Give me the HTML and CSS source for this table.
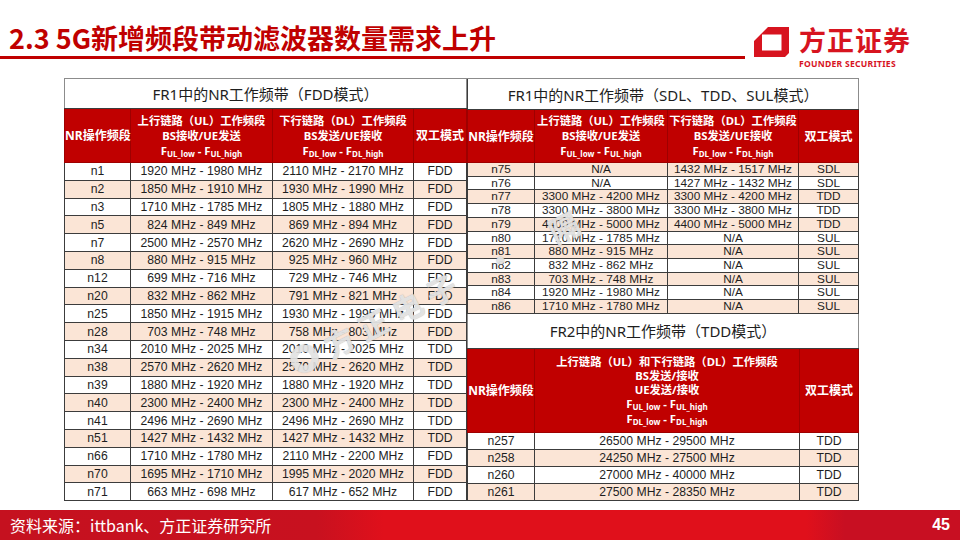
FILE: index.html
```html
<!DOCTYPE html>
<html lang="zh-CN">
<head>
<meta charset="utf-8">
<title>2.3 5G新增频段带动滤波器数量需求上升</title>
<link rel="stylesheet" href="styles.css">
</head>
<body>
<div class="slide">
  <header class="top">
    <div class="title-wrap">
      <h1 class="title">2.3 5G新增频段带动滤波器数量需求上升</h1>
      <div class="rule"></div>
    </div>
    <div class="logo">
      <svg class="logo-mark" width="36" height="32" viewBox="0 0 36 32">
        <path fill="#d7141f" fill-rule="evenodd" d="M14 1 L35 1 L35 27 L31 31 L0 31 L0 15 Z M8 8.5 L27.5 8.5 L27.5 24.5 L8 24.5 Z"/>
      </svg>
      <div class="logo-text">
        <div class="logo-cn">方正证券</div>
        <div class="logo-en">FOUNDER SECURITIES</div>
      </div>
    </div>
  </header>

  <main class="content">
    <table class="t left">
      <colgroup><col class="l1"><col class="l2"><col class="l3"><col class="l4"></colgroup>
      <tr class="cap"><td colspan="4">FR1中的NR工作频带（FDD模式）</td></tr>
      <tr class="hd">
        <td>NR操作频段</td>
        <td>上行链路（UL）工作频段<br>BS接收/UE发送<br><span class="f">F<span class="sb">UL_low</span> - F<span class="sb">UL_high</span></span></td>
        <td>下行链路（DL）工作频段<br>BS发送/UE接收<br><span class="f">F<span class="sb">DL_low</span> - F<span class="sb">DL_high</span></span></td>
        <td>双工模式</td>
      </tr>
      <tr class="row"><td>n1</td><td>1920 MHz - 1980 MHz</td><td>2110 MHz - 2170 MHz</td><td>FDD</td></tr>
      <tr class="row alt"><td>n2</td><td>1850 MHz - 1910 MHz</td><td>1930 MHz - 1990 MHz</td><td>FDD</td></tr>
      <tr class="row"><td>n3</td><td>1710 MHz - 1785 MHz</td><td>1805 MHz - 1880 MHz</td><td>FDD</td></tr>
      <tr class="row alt"><td>n5</td><td>824 MHz - 849 MHz</td><td>869 MHz - 894 MHz</td><td>FDD</td></tr>
      <tr class="row"><td>n7</td><td>2500 MHz - 2570 MHz</td><td>2620 MHz - 2690 MHz</td><td>FDD</td></tr>
      <tr class="row alt"><td>n8</td><td>880 MHz - 915 MHz</td><td>925 MHz - 960 MHz</td><td>FDD</td></tr>
      <tr class="row"><td>n12</td><td>699 MHz - 716 MHz</td><td>729 MHz - 746 MHz</td><td>FDD</td></tr>
      <tr class="row alt"><td>n20</td><td>832 MHz - 862 MHz</td><td>791 MHz - 821 MHz</td><td>FDD</td></tr>
      <tr class="row"><td>n25</td><td>1850 MHz - 1915 MHz</td><td>1930 MHz - 1995 MHz</td><td>FDD</td></tr>
      <tr class="row alt"><td>n28</td><td>703 MHz - 748 MHz</td><td>758 MHz - 803 MHz</td><td>FDD</td></tr>
      <tr class="row"><td>n34</td><td>2010 MHz - 2025 MHz</td><td>2010 MHz - 2025 MHz</td><td>TDD</td></tr>
      <tr class="row alt"><td>n38</td><td>2570 MHz - 2620 MHz</td><td>2570 MHz - 2620 MHz</td><td>TDD</td></tr>
      <tr class="row"><td>n39</td><td>1880 MHz - 1920 MHz</td><td>1880 MHz - 1920 MHz</td><td>TDD</td></tr>
      <tr class="row alt"><td>n40</td><td>2300 MHz - 2400 MHz</td><td>2300 MHz - 2400 MHz</td><td>TDD</td></tr>
      <tr class="row"><td>n41</td><td>2496 MHz - 2690 MHz</td><td>2496 MHz - 2690 MHz</td><td>TDD</td></tr>
      <tr class="row alt"><td>n51</td><td>1427 MHz - 1432 MHz</td><td>1427 MHz - 1432 MHz</td><td>TDD</td></tr>
      <tr class="row"><td>n66</td><td>1710 MHz - 1780 MHz</td><td>2110 MHz - 2200 MHz</td><td>FDD</td></tr>
      <tr class="row alt"><td>n70</td><td>1695 MHz - 1710 MHz</td><td>1995 MHz - 2020 MHz</td><td>FDD</td></tr>
      <tr class="row"><td>n71</td><td>663 MHz - 698 MHz</td><td>617 MHz - 652 MHz</td><td>FDD</td></tr>
    </table>

    <div class="right">
      <table class="t r1">
        <colgroup><col class="r1c1"><col class="r1c2"><col class="r1c3"><col class="r1c4"></colgroup>
        <tr class="cap"><td colspan="4">FR1中的NR工作频带（SDL、TDD、SUL模式）</td></tr>
        <tr class="hd">
          <td>NR操作频段</td>
          <td>上行链路（UL）工作频段<br>BS接收/UE发送<br><span class="f">F<span class="sb">UL_low</span> - F<span class="sb">UL_high</span></span></td>
          <td>下行链路（DL）工作频段<br>BS发送/UE接收<br><span class="f">F<span class="sb">DL_low</span> - F<span class="sb">DL_high</span></span></td>
          <td>双工模式</td>
        </tr>
        <tr class="row alt"><td>n75</td><td>N/A</td><td>1432 MHz - 1517 MHz</td><td>SDL</td></tr>
        <tr class="row"><td>n76</td><td>N/A</td><td>1427 MHz - 1432 MHz</td><td>SDL</td></tr>
        <tr class="row alt"><td>n77</td><td>3300 MHz - 4200 MHz</td><td>3300 MHz - 4200 MHz</td><td>TDD</td></tr>
        <tr class="row"><td>n78</td><td>3300 MHz - 3800 MHz</td><td>3300 MHz - 3800 MHz</td><td>TDD</td></tr>
        <tr class="row alt"><td>n79</td><td>4400 MHz - 5000 MHz</td><td>4400 MHz - 5000 MHz</td><td>TDD</td></tr>
        <tr class="row"><td>n80</td><td>1710 MHz - 1785 MHz</td><td>N/A</td><td>SUL</td></tr>
        <tr class="row alt"><td>n81</td><td>880 MHz - 915 MHz</td><td>N/A</td><td>SUL</td></tr>
        <tr class="row"><td>n82</td><td>832 MHz - 862 MHz</td><td>N/A</td><td>SUL</td></tr>
        <tr class="row alt"><td>n83</td><td>703 MHz - 748 MHz</td><td>N/A</td><td>SUL</td></tr>
        <tr class="row"><td>n84</td><td>1920 MHz - 1980 MHz</td><td>N/A</td><td>SUL</td></tr>
        <tr class="row alt"><td>n86</td><td>1710 MHz - 1780 MHz</td><td>N/A</td><td>SUL</td></tr>
      </table>
      <table class="t r2">
        <colgroup><col class="r2c1"><col class="r2c2"><col class="r2c3"></colgroup>
        <tr class="cap"><td colspan="3">FR2中的NR工作频带（TDD模式）</td></tr>
        <tr class="hd">
          <td>NR操作频段</td>
          <td>上行链路（UL）和下行链路（DL）工作频段<br>BS发送/接收<br>UE发送/接收<br><span class="f">F<span class="sb">UL_low</span> - F<span class="sb">UL_high</span></span><br><span class="f">F<span class="sb">DL_low</span> - F<span class="sb">DL_high</span></span></td>
          <td>双工模式</td>
        </tr>
        <tr class="row"><td>n257</td><td>26500 MHz - 29500 MHz</td><td>TDD</td></tr>
        <tr class="row alt"><td>n258</td><td>24250 MHz - 27500 MHz</td><td>TDD</td></tr>
        <tr class="row"><td>n260</td><td>27000 MHz - 40000 MHz</td><td>TDD</td></tr>
        <tr class="row alt"><td>n261</td><td>27500 MHz - 28350 MHz</td><td>TDD</td></tr>
      </table>
    </div>
  </main>

  <footer class="foot">
    <span class="src">资料来源：ittbank、方正证券研究所</span>
    <span class="pg">45</span>
  </footer>

  <div class="wm"><span class="wm-dot"></span>方正电子<span class="wm-gap">·</span>隔</div>
</div>
</body>
</html>
```

FILE: styles.css
```css
* { box-sizing: border-box; }
html, body { margin: 0; padding: 0; background: #fff; }
body { font-family: "Noto Sans", "Noto Sans CJK SC", sans-serif; }

.slide {
  width: 960px;
  height: 540px;
  position: relative;
  overflow: hidden;
  display: flex;
  flex-direction: column;
  background: #fff;
}

/* header */
.top { height: 78px; flex: none; display: flex; }
.title-wrap { width: 745px; display: flex; flex-direction: column; }
.title {
  margin: 0;
  padding: 23px 0 0 9px;
  font-family: "Noto Sans CJK SC", sans-serif;
  font-size: 27px;
  line-height: 30px;
  font-weight: 700;
  color: #c00000;
  white-space: nowrap;
}
.rule { height: 3px; background: #c00000; margin-top: 3px; }

.logo { display: flex; align-items: flex-start; margin-left: 9px; padding-top: 26px; gap: 9px; }
.logo-mark { display: block; }
.logo-text { display: flex; flex-direction: column; }
.logo-cn {
  font-family: "Noto Sans CJK SC", sans-serif;
  font-size: 27px;
  line-height: 27px;
  font-weight: 700;
  color: #d7141f;
  letter-spacing: 1px;
}
.logo-en {
  font-family: "Noto Sans", sans-serif;
  font-size: 8.6px;
  line-height: 10px;
  font-weight: 700;
  color: #d7141f;
  letter-spacing: 0.25px;
  margin-top: 6px;
}

/* content */
.content { flex: 1; display: flex; align-items: flex-start; padding-left: 64px; }
.right { display: flex; flex-direction: column; }

.t {
  border-collapse: collapse;
  table-layout: fixed;
  font-family: "Liberation Sans", "Noto Sans CJK SC", sans-serif;
  font-size: 12px;
  color: #1e1e1e;
}
.t td {
  border: 1px solid #3c3c3c;
  padding: 0;
  text-align: center;
  vertical-align: middle;
  white-space: nowrap;
}
.t .cap td {
  font-family: "Noto Sans", "Noto Sans CJK SC", sans-serif;
  font-size: 15px;
  color: #1e1e1e;
  border-color: #8c8c8c;
  border-bottom-color: #3c3c3c;
  background: #fff;
}
.t .hd td {
  font-family: "Noto Sans", "Noto Sans CJK SC", sans-serif;
  background: #c00000;
  color: #fff;
  font-weight: 700;
  font-size: 11.3px;
  line-height: 15px;
  border-color: #9e0000;
}
.t .hd td:first-child, .t .hd td:last-child { font-size: 12px; }
.f { font-weight: 700; }
.sb { font-size: 8px; position: relative; top: 2px; }
.t .alt td { background: #fbe5d6; }

.left { width: 402px; }
.l1 { width: 66px; } .l2 { width: 142px; } .l3 { width: 141px; } .l4 { width: 53px; }
.left .cap td { height: 30px; }
.left .hd td { height: 54px; }
.left .row td { height: 17.8px; line-height: 16px; font-size: 12.2px; }

.r1, .r2 { width: 391px; }
.r1c1 { width: 67px; } .r1c2 { width: 133px; } .r1c3 { width: 131px; } .r1c4 { width: 60px; }
.r2c1 { width: 67px; } .r2c2 { width: 265px; } .r2c3 { width: 59px; }
.r1 .cap td { height: 31px; border-left-color: #3c3c3c; }
.r1 .hd td { height: 53px; }
.r1 .row td { height: 13.7px; line-height: 12.7px; font-size: 11.8px; }
.r2 .cap td { height: 35px; border-top: none; }
.r2 .hd td { height: 84px; line-height: 14px; }
.r2 .row td { height: 17px; line-height: 15px; font-size: 12.2px; }

/* footer */
.foot {
  height: 30px;
  flex: none;
  display: flex;
  align-items: center;
  justify-content: space-between;
  padding: 0 10px 0 10px;
  color: #fff;
  background: linear-gradient(to right, #c5111f 0%, #c8111f 33%, #e0101b 40%, #e0101b 84%, #c80f22 88%, #c80f22 100%);
}
.src { font-size: 16px; font-family: "Noto Sans CJK SC", sans-serif; }
.pg { font-size: 16px; font-weight: 700; font-family: "Liberation Sans", sans-serif; }

/* watermark */
.wm {
  position: absolute;
  left: 292px;
  top: 343px;
  transform: rotate(-27deg);
  transform-origin: left center;
  font-family: "Noto Sans CJK SC", sans-serif;
  font-size: 30px;
  font-weight: 700;
  color: rgba(236, 236, 236, 0.85);
  text-shadow: 0 0 1px rgba(140, 140, 140, 0.7);
  white-space: nowrap;
  letter-spacing: 8px;
  pointer-events: none;
  display: flex;
  align-items: center;
  gap: 10px;
}
.wm-gap { margin: 0 24px 0 18px; }
.wm-dot {
  width: 28px;
  height: 28px;
  border-radius: 50%;
  border: 7px solid rgba(225, 225, 225, 0.9);
  box-shadow: 0 0 1px rgba(140, 140, 140, 0.7);
  display: inline-block;
}
```
